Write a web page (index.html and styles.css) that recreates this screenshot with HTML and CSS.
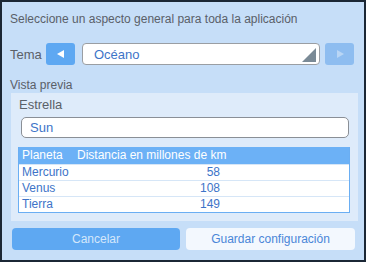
FILE: index.html
```html
<!DOCTYPE html>
<html lang="es">
<head>
<meta charset="utf-8">
<link rel="stylesheet" href="styles.css">
</head>
<body>
<div class="dialog">
  <div class="intro">Seleccione un aspecto general para toda la aplicación</div>
  <div class="theme-row">
    <span class="label">Tema</span>
    <button class="nav nav-prev" type="button"><svg width="10" height="10" viewBox="0 0 10 10"><polygon points="8,1 8,9 1,5" fill="#fff"/></svg></button>
    <div class="combo"><span>Océano</span><svg class="combo-arrow" width="14" height="14" viewBox="0 0 14 14"><polygon points="14,0 14,14 0,14" fill="#7a8a96"/></svg></div>
    <button class="nav nav-next" type="button"><svg width="10" height="10" viewBox="0 0 10 10"><polygon points="2,1 2,9 9,5" fill="#b9d6f5"/></svg></button>
  </div>
  <div class="section-title">Vista previa</div>
  <div class="preview">
    <div class="field-label">Estrella</div>
    <div class="input">Sun</div>
    <div class="table">
      <div class="tr head"><span>Planeta</span><span>Distancia en millones de km</span><span></span></div>
      <div class="tr"><span>Mercurio</span><span class="num">58</span><span></span></div>
      <div class="tr"><span>Venus</span><span class="num">108</span><span></span></div>
      <div class="tr"><span>Tierra</span><span class="num">149</span><span></span></div>
    </div>
  </div>
  <div class="actions">
    <button class="btn btn-cancel" type="button">Cancelar</button>
    <button class="btn btn-save" type="button">Guardar configuración</button>
  </div>
</div>
</body>
</html>
```
FILE: styles.css
```css
html, body {
  margin: 0;
  padding: 0;
  background: #1b2735;
}
.dialog {
  box-sizing: border-box;
  width: 366px;
  height: 262px;
  border: 2px solid #1b2735;
  background: #c6def8;
  font-family: "Liberation Sans", Arial, sans-serif;
  font-size: 12px;
  color: #5a6068;
  padding: 0 9px 0 8px;
  display: flex;
  flex-direction: column;
}
.intro {
  margin-top: 10px;
  height: 14px;
  line-height: 14px;
}
.theme-row {
  margin-top: 17px;
  display: flex;
  align-items: center;
  height: 22px;
}
.label {
  width: 36px;
  font-size: 13px;
}
.nav {
  width: 29px;
  height: 22px;
  border: none;
  border-radius: 3px;
  padding: 0;
  display: flex;
  align-items: center;
  justify-content: center;
}
.nav-prev { background: #5ea8f2; }
.nav-next { background: #8ebdf0; margin-left: 5px; }
.combo {
  box-sizing: border-box;
  margin-left: 7px;
  width: 238px;
  height: 22px;
  background: #fff;
  border: 1px solid #9a9ea3;
  border-radius: 4px;
  display: flex;
  align-items: center;
  justify-content: space-between;
  padding: 0 3px 0 11px;
  color: #3d74c8;
  font-size: 13px;
}
.combo-arrow { margin-top: 2px; }
.section-title {
  margin-top: 13px;
  height: 14px;
  line-height: 14px;
}
.preview {
  margin-top: 1px;
  margin-left: 1px;
  width: 347px;
  height: 128px;
  box-sizing: border-box;
  background: #deebfa;
  padding: 5px 8px 0 7px;
}
.field-label {
  height: 14px;
  line-height: 14px;
  font-size: 13px;
  padding-left: 1px;
}
.input {
  box-sizing: border-box;
  margin: 5px 1px 0 3px;
  height: 21px;
  background: #fff;
  border: 1px solid #8a8f96;
  border-radius: 5px;
  padding-left: 8px;
  line-height: 19px;
  font-size: 13px;
  color: #3d74c8;
}
.table {
  margin-top: 9px;
  background: #fff;
  border: 1px solid #6aaef3;
  border-top: none;
}
.tr {
  display: grid;
  grid-template-columns: 55px 150px 1fr;
  height: 15px;
  line-height: 15px;
  border-top: 1px solid #d6e6f7;
  color: #3d74c8;
  font-size: 12px;
  white-space: nowrap;
}
.tr span { padding-left: 3px; }
.tr .num { text-align: right; padding-right: 4px; }
.tr.head {
  height: 17px;
  line-height: 17px;
  background: #6cb1f6;
  color: #fff;
  border-top: none;
}
.actions {
  margin-top: 7px;
  display: flex;
  gap: 6px;
  padding-left: 2px;
}
.btn {
  height: 22px;
  border: none;
  border-radius: 4px;
  font-family: "Liberation Sans", Arial, sans-serif;
  font-size: 12px;
  padding: 0;
}
.btn-cancel {
  width: 168px;
  background: #5ea8f2;
  color: #d4e7fb;
}
.btn-save {
  width: 169px;
  background: #f3f8fe;
  color: #4a86d8;
}
```
